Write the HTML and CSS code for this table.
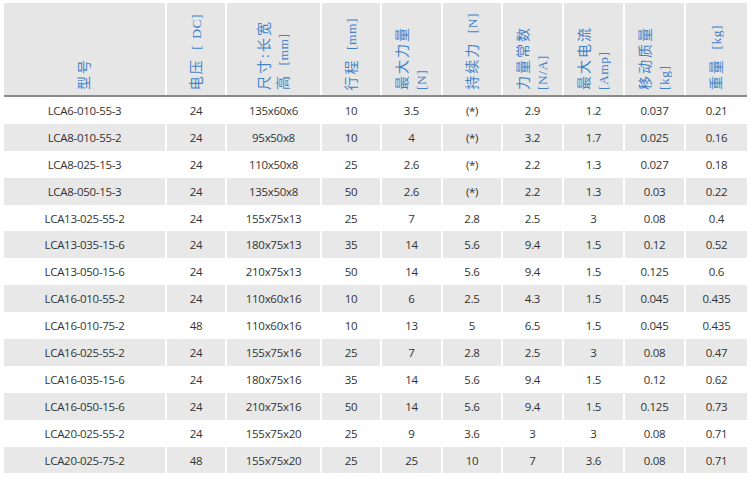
FILE: index.html
```html
<!DOCTYPE html>
<html lang="zh">
<head>
<meta charset="utf-8">
<title>LCA 参数表</title>
<link rel="stylesheet" href="styles.css">
</head>
<body>
<table class="sheet">
  <colgroup>
    <col class="c-model"><col class="c-v"><col class="c-size"><col class="c-n"><col class="c-n2"><col class="c-n"><col class="c-n2"><col class="c-n2"><col class="c-n2"><col class="c-last">
  </colgroup>
  <thead>
    <tr class="head">
      <th><span class="vt">型号</span></th>
      <th><span class="vt">电压 <span class="unit">[ DC]</span></span></th>
      <th><span class="vt">尺寸:长宽<br>高 <span class="unit">[mm]</span></span></th>
      <th><span class="vt">行程 <span class="unit">[mm]</span></span></th>
      <th><span class="vt">最大力量<br><span class="unit">[N]</span></span></th>
      <th><span class="vt">持续力 <span class="unit">[N]</span></span></th>
      <th><span class="vt">力量常数<br><span class="unit">[N/A]</span></span></th>
      <th><span class="vt">最大电流<br><span class="unit">[Amp]</span></span></th>
      <th><span class="vt">移动质量<br><span class="unit">[kg]</span></span></th>
      <th><span class="vt">重量 <span class="unit">[kg]</span></span></th>
    </tr>
    <tr class="rule"><td colspan="10"></td></tr>
  </thead>
  <tbody>
    <tr><td>LCA6-010-55-3</td><td>24</td><td>135x60x6</td><td>10</td><td>3.5</td><td>(*)</td><td>2.9</td><td>1.2</td><td>0.037</td><td>0.21</td></tr>
    <tr><td>LCA8-010-55-2</td><td>24</td><td>95x50x8</td><td>10</td><td>4</td><td>(*)</td><td>3.2</td><td>1.7</td><td>0.025</td><td>0.16</td></tr>
    <tr><td>LCA8-025-15-3</td><td>24</td><td>110x50x8</td><td>25</td><td>2.6</td><td>(*)</td><td>2.2</td><td>1.3</td><td>0.027</td><td>0.18</td></tr>
    <tr><td>LCA8-050-15-3</td><td>24</td><td>135x50x8</td><td>50</td><td>2.6</td><td>(*)</td><td>2.2</td><td>1.3</td><td>0.03</td><td>0.22</td></tr>
    <tr><td>LCA13-025-55-2</td><td>24</td><td>155x75x13</td><td>25</td><td>7</td><td>2.8</td><td>2.5</td><td>3</td><td>0.08</td><td>0.4</td></tr>
    <tr><td>LCA13-035-15-6</td><td>24</td><td>180x75x13</td><td>35</td><td>14</td><td>5.6</td><td>9.4</td><td>1.5</td><td>0.12</td><td>0.52</td></tr>
    <tr><td>LCA13-050-15-6</td><td>24</td><td>210x75x13</td><td>50</td><td>14</td><td>5.6</td><td>9.4</td><td>1.5</td><td>0.125</td><td>0.6</td></tr>
    <tr><td>LCA16-010-55-2</td><td>24</td><td>110x60x16</td><td>10</td><td>6</td><td>2.5</td><td>4.3</td><td>1.5</td><td>0.045</td><td>0.435</td></tr>
    <tr><td>LCA16-010-75-2</td><td>48</td><td>110x60x16</td><td>10</td><td>13</td><td>5</td><td>6.5</td><td>1.5</td><td>0.045</td><td>0.435</td></tr>
    <tr><td>LCA16-025-55-2</td><td>24</td><td>155x75x16</td><td>25</td><td>7</td><td>2.8</td><td>2.5</td><td>3</td><td>0.08</td><td>0.47</td></tr>
    <tr><td>LCA16-035-15-6</td><td>24</td><td>180x75x16</td><td>35</td><td>14</td><td>5.6</td><td>9.4</td><td>1.5</td><td>0.12</td><td>0.62</td></tr>
    <tr><td>LCA16-050-15-6</td><td>24</td><td>210x75x16</td><td>50</td><td>14</td><td>5.6</td><td>9.4</td><td>1.5</td><td>0.125</td><td>0.73</td></tr>
    <tr><td>LCA20-025-55-2</td><td>24</td><td>155x75x20</td><td>25</td><td>9</td><td>3.6</td><td>3</td><td>3</td><td>0.08</td><td>0.71</td></tr>
    <tr><td>LCA20-025-75-2</td><td>48</td><td>155x75x20</td><td>25</td><td>25</td><td>10</td><td>7</td><td>3.6</td><td>0.08</td><td>0.71</td></tr>
  </tbody>
</table>
</body>
</html>
```

FILE: styles.css
```css
html, body {
  margin: 0;
  padding: 0;
  background: #ffffff;
}

.sheet {
  margin: 3px 0 0 2px;
  border-collapse: separate;
  border-spacing: 2px 0;
  table-layout: fixed;
  width: 747px;
  font-family: "Open Sans", "Noto Sans", sans-serif;
  font-size: 11.5px;
  letter-spacing: -0.3px;
  color: #333333;
}

.c-model { width: 161px; }
.c-v { width: 58px; }
.c-size { width: 93px; }
.c-n { width: 58px; }
.c-n2 { width: 59px; }
.c-last { width: 61px; }

.head th {
  box-sizing: border-box;
  height: 92px;
  padding: 0 0 5px;
  background: #e6e6e6;
  vertical-align: bottom;
  text-align: center;
  font-weight: normal;
  font-size: 0;
  line-height: 0;
}

.vt {
  display: inline-block;
  vertical-align: bottom;
  writing-mode: vertical-rl;
  text-orientation: sideways;
  transform: rotate(180deg);
  white-space: nowrap;
  font-family: "Liberation Serif", "Noto Sans CJK SC", serif;
  font-size: 14px;
  line-height: 19px;
  letter-spacing: 2px;
  word-spacing: 3px;
  color: #4482c6;
  text-align: start;
}

.unit {
  letter-spacing: 0.5px;
  word-spacing: 2px;
  font-size: 13.5px;
}

.rule td {
  height: 2px;
  padding: 0;
  background: #8a8a8a;
}

tbody tr {
  height: 26.9px;
}

tbody td {
  padding: 0;
  text-align: center;
  vertical-align: middle;
  white-space: nowrap;
}

tbody tr:nth-child(even) td {
  background: #e8e8e8;
}
```
